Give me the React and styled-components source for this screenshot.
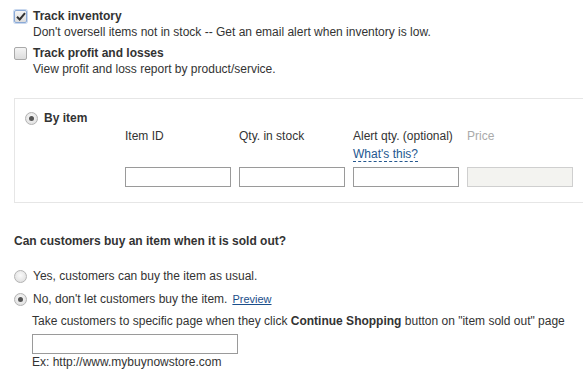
import React from "react";
import styled, { createGlobalStyle } from "styled-components";

const GlobalStyle = createGlobalStyle`
  body {
    margin: 0;
    background: #fff;
    font-family: "Liberation Sans", Arial, sans-serif;
    font-size: 12px;
    color: #333;
  }
`;

const Page = styled.div`
  padding: 9px 0 0 14px;
  width: 583px;
  box-sizing: border-box;
  overflow: hidden;
`;

const OptionRow = styled.div`
  display: flex;
  align-items: flex-start;
  gap: 6px;
  margin-bottom: ${p => p.$gap || 0}px;
`;

const Check = styled.span`
  flex: none;
  width: 11px;
  height: 11px;
  margin-top: 1px;
  border: 1px solid ${p => (p.$checked ? "#8aa9d6" : "#a9a9a9")};
  border-radius: 2px;
  background: linear-gradient(#f4f4f4, #dcdcdc);
  display: flex;
  align-items: center;
  justify-content: center;
  box-shadow: ${p => (p.$checked ? "0 0 0 1px #c9d8ee" : "none")};
`;

const Radio = styled.span`
  flex: none;
  width: 11px;
  height: 11px;
  margin-top: 1px;
  border: 1px solid #b3b3b3;
  border-radius: 50%;
  background: radial-gradient(circle at 50% 40%, #fafafa, #dadada);
  display: flex;
  align-items: center;
  justify-content: center;

  &::after {
    content: "";
    display: ${p => (p.$checked ? "block" : "none")};
    width: 5px;
    height: 5px;
    border-radius: 50%;
    background: #555;
  }
`;

const TextCol = styled.div`
  display: flex;
  flex-direction: column;
`;

const Title = styled.div`
  font-weight: bold;
  font-size: 12px;
  line-height: 15px;
  color: #333;
`;

const Desc = styled.div`
  line-height: ${p => p.$lh || 16}px;
`;

const ItemBox = styled.div`
  margin-top: 21px;
  border: 1px solid #e6e6e6;
  border-right: none;
  padding: 12px 0 15px 10px;
`;

const ItemGrid = styled.div`
  display: grid;
  grid-template-columns: repeat(4, 106px);
  column-gap: 8px;
  margin-left: 100px;
  margin-top: 3px;
`;

const ColHead = styled.div`
  height: 38px;
  display: flex;
  flex-direction: column;
  align-items: flex-start;
  color: ${p => (p.$muted ? "#aaa" : "#333")};
  line-height: 14px;
`;

const HelpLink = styled.span`
  margin-top: 5px;
  color: #24578f;
  line-height: 13px;
  border-bottom: 1px dashed #24578f;
`;

const Field = styled.input`
  box-sizing: border-box;
  width: ${p => p.$w || 106}px;
  height: 20px;
  margin: 0;
  border: 1px solid ${p => (p.disabled ? "#cfcfcf" : "#9a9a9a")};
  background: ${p => (p.disabled ? "#f3f3f0" : "#fff")};
  font: inherit;
`;

const Question = styled.div`
  margin-top: 31px;
  font-weight: bold;
  line-height: 14px;
  margin-bottom: 21px;
`;

const PreviewLink = styled.a`
  margin-left: 5px;
  font-size: 11px;
  color: #1b4e8a;
  text-decoration: underline;
`;

const SubBlock = styled.div`
  padding-left: 18px;
  display: flex;
  flex-direction: column;
  align-items: flex-start;
`;

const Hint = styled(Desc)`
  margin: 8px 0 6px;
`;

const CheckMark = () => (
  <svg width="10" height="9" viewBox="0 0 10 9">
    <path d="M1 4.8 L3.7 7.5 L9 1.2" fill="none" stroke="#333" strokeWidth="2" />
  </svg>
);

export default function App() {
  return (
    <>
      <GlobalStyle />
      <Page>
        <OptionRow $gap={6}>
          <Check $checked>
            <CheckMark />
          </Check>
          <TextCol>
            <Title>Track inventory</Title>
            <Desc>Don't oversell items not in stock -- Get an email alert when inventory is low.</Desc>
          </TextCol>
        </OptionRow>
        <OptionRow>
          <Check />
          <TextCol>
            <Title>Track profit and losses</Title>
            <Desc>View profit and loss report by product/service.</Desc>
          </TextCol>
        </OptionRow>

        <ItemBox>
          <OptionRow>
            <Radio $checked />
            <Title>By item</Title>
          </OptionRow>
          <ItemGrid>
            <ColHead>Item ID</ColHead>
            <ColHead>Qty. in stock</ColHead>
            <ColHead>
              Alert qty. (optional)
              <HelpLink>What's this?</HelpLink>
            </ColHead>
            <ColHead $muted>Price</ColHead>
            <Field />
            <Field />
            <Field />
            <Field disabled />
          </ItemGrid>
        </ItemBox>

        <Question>Can customers buy an item when it is sold out?</Question>

        <OptionRow $gap={9}>
          <Radio />
          <Desc $lh={14}>Yes, customers can buy the item as usual.</Desc>
        </OptionRow>
        <OptionRow>
          <Radio $checked />
          <Desc $lh={14}>
            No, don't let customers buy the item.
            <PreviewLink>Preview</PreviewLink>
          </Desc>
        </OptionRow>
        <SubBlock>
          <Hint $lh={14}>
            Take customers to specific page when they click <b>Continue Shopping</b> button on "item sold out" page
          </Hint>
          <Field $w={206} />
          <Desc $lh={16}>Ex: http://www.mybuynowstore.com</Desc>
        </SubBlock>
      </Page>
    </>
  );
}
